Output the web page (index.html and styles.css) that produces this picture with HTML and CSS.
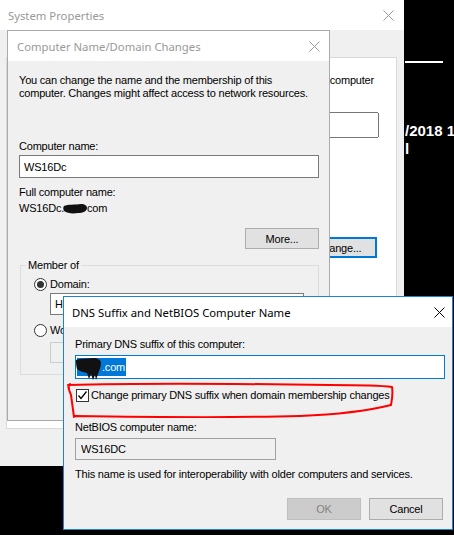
FILE: index.html
```html
<!DOCTYPE html>
<html lang="en">
<head>
    <meta charset="UTF-8">
    <title>DNS Suffix and NetBIOS Computer Name</title>
    <link rel="stylesheet" href="styles.css">
</head>
<body>
<div class="desktop">
    <!-- desktop wallpaper info, mostly hidden behind the windows -->
    <div class="desktop-info">
        <div class="rule"></div>
        <div class="stamp">/2018 1</div>
        <div class="stamp">l</div>
    </div>

    <!-- System Properties (inactive) -->
    <div class="window sysprops">
        <div class="titlebar">
            <span class="title">System Properties</span>
            <svg class="close" width="11" height="11" viewBox="0 0 11 11"><path d="M0.5 0.5L10.5 10.5M10.5 0.5L0.5 10.5"/></svg>
        </div>
        <div class="client">
            <div class="tabpage">
                <p class="tab-text">computer</p>
                <input type="text" class="tab-field" value="">
                <button class="btn btn-default">Change...</button>
            </div>
        </div>
    </div>

    <!-- Computer Name/Domain Changes (inactive) -->
    <div class="window cn-dialog">
        <div class="titlebar">
            <span class="title">Computer Name/Domain Changes</span>
            <svg class="close" width="11" height="11" viewBox="0 0 11 11"><path d="M0.5 0.5L10.5 10.5M10.5 0.5L0.5 10.5"/></svg>
        </div>
        <div class="client">
            <p class="intro">You can change the name and the membership of this computer. Changes might affect access to network resources.</p>
            <label class="lbl cn-name-lbl" for="computerName">Computer name:</label>
            <input type="text" id="computerName" class="field cn-name" value="WS16Dc">
            <p class="lbl full-lbl">Full computer name:</p>
            <p class="lbl full-name">WS16Dc.<svg class="blot" width="25" height="11" viewBox="0 0 25 11"><path d="M1 3C5 1 12 2 18 1C22 1 24 3 24 5C24 8 20 10 15 10C9 11 4 10 1 8C0 6 0 4 1 3Z"/></svg>com</p>
            <div class="btn-row">
                <button class="btn">More...</button>
            </div>
            <fieldset class="member">
                <legend>Member of</legend>
                <div class="radio-row">
                    <span class="radio checked"></span>
                    <span>Domain:</span>
                </div>
                <input type="text" class="field member-field" value="HI">
                <div class="radio-row second">
                    <span class="radio"></span>
                    <span>Workgroup:</span>
                </div>
                <input type="text" class="field member-field disabled" value="" disabled>
            </fieldset>
        </div>
    </div>

    <!-- DNS Suffix and NetBIOS Computer Name (active) -->
    <div class="window dns-dialog">
        <div class="titlebar">
            <span class="title">DNS Suffix and NetBIOS Computer Name</span>
            <svg class="close" width="11" height="11" viewBox="0 0 11 11"><path d="M0.5 0.5L10.5 10.5M10.5 0.5L0.5 10.5"/></svg>
        </div>
        <div class="client">
            <label class="lbl suffix-lbl">Primary DNS suffix of this computer:</label>
            <div class="field suffix-field">
                <span class="selection"><svg class="blot-sel" width="26" height="24" viewBox="0 0 26 24"><path d="M0 3C4 1 10 2 17 1C22 1 25 3 25 6C25 10 23 14 22 17L20 23L19 18L17 23L15 17L13 22L11 16C7 15 3 14 1 12C0 9 0 5 0 3Z"/></svg>.com</span>
            </div>
            <label class="check-row">
                <span class="checkbox">
                    <svg width="11" height="11" viewBox="0 0 11 11"><path d="M1.5 5.5L4 8.5L9.5 1.5"/></svg>
                </span>
                <span>Change primary DNS suffix when domain membership changes</span>
            </label>
            <label class="lbl netbios-lbl">NetBIOS computer name:</label>
            <input type="text" class="field netbios-field" value="WS16DC" readonly>
            <p class="lbl note">This name is used for interoperability with older computers and services.</p>
            <div class="btn-row dns-buttons">
                <button class="btn" disabled>OK</button>
                <button class="btn">Cancel</button>
            </div>
        </div>
    </div>

    <!-- red marker scribbled round the checkbox -->
    <svg class="annotation" width="454" height="535" viewBox="0 0 454 535">
        <path d="M70 384C67 386 69 390 71 395C72 402 73 410 74 417M68 385C140 383 260 384 330 385C360 385 385 386 392 387C393 393 392 400 391 405C375 409 350 414 300 416C230 418 140 417 75 416"/>
    </svg>
</div>
</body>
</html>
```

FILE: styles.css
```css
body {
    margin: 0;
    width: 454px;
    height: 535px;
    overflow: hidden;
    background: #000;
    font-family: "Liberation Sans", Arial, sans-serif;
    font-size: 11px;
    letter-spacing: -0.2px;
    color: #000;
}
p {
    margin: 0;
}
.desktop {
    position: relative;
    width: 454px;
    height: 535px;
    overflow: hidden;
}

/* desktop text in the black area */
.desktop-info {
    position: absolute;
    left: 405px;
    top: 61px;
    width: 49px;
    overflow: hidden;
    color: #fff;
}
.rule {
    width: 38px;
    height: 2px;
    background: #fff;
}
.stamp {
    font-weight: bold;
    font-size: 15px;
    line-height: 18px;
    letter-spacing: 0;
    white-space: nowrap;
}
.rule + .stamp {
    margin-top: 59px;
}

/* windows */
.window {
    position: absolute;
    box-sizing: border-box;
    background: #f0f0f0;
    display: flex;
    flex-direction: column;
}
.sysprops {
    left: 0;
    top: 0;
    width: 404px;
    height: 466px;
}
.cn-dialog {
    left: 7px;
    top: 30px;
    width: 323px;
    height: 391px;
    border: 1px solid #aaa;
}
.dns-dialog {
    left: 63px;
    top: 296px;
    width: 390px;
    height: 234px;
    border: 1px solid #1883d7;
}
.titlebar {
    flex: none;
    height: 30px;
    background: #fff;
    display: flex;
    align-items: center;
    justify-content: space-between;
}
.title {
    font-family: "Noto Sans", sans-serif;
    font-size: 11.3px;
    letter-spacing: 0;
    color: #999;
}
.close path {
    stroke: #999;
    stroke-width: 1;
    fill: none;
}
.sysprops .titlebar {
    padding: 0 10px 0 8px;
}
.cn-dialog .titlebar {
    padding: 0 9px 0 9px;
}
.dns-dialog .titlebar {
    padding: 0 7px 0 8px;
}
.dns-dialog .title {
    color: #000;
}
.dns-dialog .close path {
    stroke: #000;
}
.client {
    flex: 1;
    display: flex;
    flex-direction: column;
}

/* System Properties tab page */
.sysprops .client {
    padding: 27px 7px 37px 6px;
}
.tabpage {
    flex: 1;
    background: #fff;
    border: 1px solid #d9d9d9;
    display: flex;
    flex-direction: column;
    align-items: flex-end;
}
.tab-text {
    margin: 16px 22px 0 0;
    line-height: 13px;
    white-space: nowrap;
}
.tab-field {
    margin: 25px 17px 0 0;
    width: 180px;
    height: 20px;
}
.tabpage .btn-default {
    margin: 99px 19px 0 0;
    width: 77px;
    height: 21px;
    border: 2px solid #0078d7;
}

/* controls */
.lbl {
    display: block;
    line-height: 13px;
}
.field {
    box-sizing: border-box;
    margin: 0;
    padding: 0 4px;
    border: 1px solid #7a7a7a;
    background: #fff;
    font-family: "Liberation Sans", Arial, sans-serif;
    font-size: 11px;
    letter-spacing: -0.2px;
    color: #000;
    outline: none;
}
.btn {
    box-sizing: border-box;
    width: 74px;
    height: 21px;
    margin: 0;
    padding: 0;
    border: 1px solid #adadad;
    background: #e1e1e1;
    font-family: "Liberation Sans", Arial, sans-serif;
    font-size: 11px;
    letter-spacing: -0.2px;
    color: #000;
}
.btn:disabled {
    background: #cccccc;
    border-color: #bfbfbf;
    color: #838383;
}
.btn-row {
    display: flex;
    justify-content: flex-end;
    gap: 8px;
}

/* Computer Name/Domain Changes */
.cn-dialog .client {
    padding: 0 10px 0 11px;
}
.intro {
    margin-top: 13px;
    line-height: 13px;
}
.cn-name-lbl {
    margin-top: 40px;
}
.cn-name {
    margin-top: 2px;
    width: 300px;
    height: 23px;
}
.full-lbl {
    margin-top: 8px;
}
.full-name {
    margin-top: 3px;
}
.blot {
    vertical-align: -2px;
    margin: 0 -1px;
}
.blot path,
.blot-sel path {
    fill: #111;
}
.cn-dialog .btn-row {
    margin-top: 13px;
}
.member {
    margin: 10px 0 0 1px;
    padding: 0 0 11px 13px;
    border: 1px solid #dcdcdc;
    display: flex;
    flex-direction: column;
    align-items: flex-start;
}
.member legend {
    margin-left: -8px;
    padding: 0 2px;
    line-height: 13px;
}
.radio-row {
    margin-top: 6px;
    display: flex;
    align-items: center;
    gap: 3px;
    line-height: 13px;
}
.radio-row.second {
    margin-top: 9px;
}
.radio {
    box-sizing: border-box;
    width: 13px;
    height: 13px;
    border: 1px solid #333;
    border-radius: 50%;
    background: #fff;
    display: flex;
    align-items: center;
    justify-content: center;
}
.radio.checked::after {
    content: "";
    width: 7px;
    height: 7px;
    border-radius: 50%;
    background: #333;
}
.member-field {
    margin: 2px 0 0 16px;
    width: 254px;
    height: 22px;
}
.member-field.disabled {
    margin-top: 5px;
    height: 21px;
    background: #f0f0f0;
    border-color: #ccc;
}

/* DNS Suffix and NetBIOS Computer Name */
.dns-dialog .client {
    padding: 0 8px 0 11px;
}
.suffix-lbl {
    margin-top: 11px;
}
.suffix-field {
    margin-top: 4px;
    width: 370px;
    height: 24px;
    padding: 2px 0 0 1px;
    border-color: #0078d7;
}
.selection {
    display: inline-flex;
    align-items: center;
    height: 18px;
    padding-right: 1px;
    background: #0078d7;
    color: #fff;
}
.blot-sel {
    margin: -1px 0 -6px -1px;
    align-self: flex-start;
}
.check-row {
    margin-top: 10px;
    display: flex;
    align-items: center;
    gap: 2px;
    line-height: 13px;
    padding-left: 1px;
}
.checkbox {
    box-sizing: border-box;
    width: 13px;
    height: 13px;
    border: 1px solid #333;
    background: #fff;
    display: flex;
    align-items: center;
    justify-content: center;
}
.checkbox path {
    fill: none;
    stroke: #000;
    stroke-width: 1.3;
}
.netbios-lbl {
    margin-top: 19px;
}
.netbios-field {
    margin-top: 4px;
    width: 201px;
    height: 22px;
    background: #f0f0f0;
    border-color: #a0a0a0;
    padding-left: 5px;
}
.note {
    margin-top: 8px;
}
.dns-buttons {
    margin: 17px 1px 0 0;
}
.dns-buttons .btn {
    height: 22px;
}

/* marker annotation */
.annotation {
    position: absolute;
    left: 0;
    top: 0;
    pointer-events: none;
}
.annotation path {
    fill: none;
    stroke: #f00;
    stroke-width: 2;
    stroke-linecap: round;
    stroke-linejoin: round;
}
```
